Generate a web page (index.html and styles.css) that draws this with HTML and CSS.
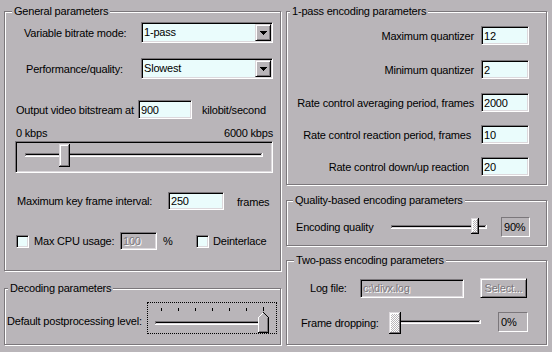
FILE: index.html
```html
<!DOCTYPE html>
<html lang="en">
<head>
  <meta charset="UTF-8">
  <title>Codec Settings</title>
  <link rel="stylesheet" href="styles.css">
</head>
<body>
  <div class="dialog">
    <div class="left-col">
      <div class="group general">
        <span class="legend lg-general">General parameters</span>

        <div class="row row-mode">
          <label class="lbl lbl-mode">Variable bitrate mode:</label>
          <div class="combo sunken">
            <span class="combo-text">1-pass</span>
            <span class="combo-btn raised">
              <svg width="7" height="4" viewBox="0 0 7 4" shape-rendering="crispEdges"><path d="M0 0h7v1h-1v1h-1v1h-1v1h-1v-1h-1v-1h-1v-1h-1z" fill="#000"/></svg>
            </span>
          </div>
        </div>

        <div class="row row-perf">
          <label class="lbl lbl-perf">Performance/quality:</label>
          <div class="combo sunken">
            <span class="combo-text">Slowest</span>
            <span class="combo-btn raised">
              <svg width="7" height="4" viewBox="0 0 7 4" shape-rendering="crispEdges"><path d="M0 0h7v1h-1v1h-1v1h-1v1h-1v-1h-1v-1h-1v-1h-1z" fill="#000"/></svg>
            </span>
          </div>
        </div>

        <div class="row row-rate">
          <label class="lbl lbl-rate">Output video bitstream at</label>
          <input class="edit sunken edit-rate" type="text" value="900">
          <span class="unit-rate">kilobit/second</span>
        </div>

        <div class="row row-scale">
          <span>0 kbps</span>
          <span>6000 kbps</span>
        </div>

        <div class="trackbox sunken">
          <svg width="254" height="28" viewBox="0 0 254 28" shape-rendering="crispEdges">
            <rect x="8" y="10" width="238" height="4" fill="#fff"/>
            <rect x="8" y="10" width="237" height="3" fill="#7b777b"/>
            <rect x="9" y="11" width="236" height="2" fill="#dcd8dc"/>
            <rect x="9" y="11" width="235" height="1" fill="#000"/>
            <rect x="42" y="1" width="11" height="23" fill="#000"/>
            <rect x="42" y="1" width="10" height="22" fill="#dcd8dc"/>
            <rect x="43" y="2" width="9" height="21" fill="#7b777b"/>
            <rect x="43" y="2" width="8" height="20" fill="#fff"/>
            <rect x="44" y="3" width="7" height="19" fill="#b9b5b9"/>
          </svg>
        </div>

        <div class="row row-key">
          <label class="lbl lbl-key">Maximum key frame interval:</label>
          <input class="edit sunken edit-key" type="text" value="250">
          <span class="unit-key">frames</span>
        </div>

        <div class="row row-cpu">
          <span class="check sunken"></span>
          <label class="lbl lbl-cpu">Max CPU usage:</label>
          <input class="edit sunken edit-cpu" type="text" value="100" disabled>
          <span class="pct">%</span>
          <span class="check sunken"></span>
          <label class="lbl lbl-deint">Deinterlace</label>
        </div>
      </div>

      <div class="group decoding">
        <span class="legend lg-decoding">Decoding parameters</span>
        <div class="row row-post">
          <label class="lbl lbl-post">Default postprocessing level:</label>
          <div class="focusbox">
            <svg width="128" height="30" viewBox="0 0 128 30" shape-rendering="crispEdges">
              <g fill="#000">
                <rect x="13" y="5" width="1" height="3"/>
                <rect x="30" y="5" width="1" height="3"/>
                <rect x="47" y="5" width="1" height="3"/>
                <rect x="64" y="5" width="1" height="3"/>
                <rect x="81" y="5" width="1" height="3"/>
                <rect x="98" y="5" width="1" height="3"/>
                <rect x="115" y="4" width="1" height="4"/>
              </g>
              <rect x="7" y="18" width="112" height="4" fill="#fff"/>
              <rect x="7" y="18" width="111" height="3" fill="#7b777b"/>
              <rect x="8" y="19" width="110" height="2" fill="#dcd8dc"/>
              <rect x="8" y="19" width="109" height="1" fill="#000"/>
              <polygon points="110,14 115,9 121,15 121,30 110,30" fill="#b9b5b9"/>
              <path d="M110.5 29V14.5L115.5 9.5" fill="none" stroke="#fff"/>
              <path d="M115.5 9.5L120.5 14.5V29.5H110" fill="none" stroke="#000"/>
              <path d="M119.5 15V28.5H111" fill="none" stroke="#7b777b"/>
            </svg>
          </div>
        </div>
      </div>
    </div>

    <div class="right-col">
      <div class="group onepass">
        <span class="legend lg-onepass">1-pass encoding parameters</span>
        <div class="qrow q1">
          <label class="lbl">Maximum quantizer</label>
          <input class="edit sunken edit-q" type="text" value="12">
        </div>
        <div class="qrow q2">
          <label class="lbl">Minimum quantizer</label>
          <input class="edit sunken edit-q" type="text" value="2">
        </div>
        <div class="qrow q3">
          <label class="lbl">Rate control averaging period, frames</label>
          <input class="edit sunken edit-q" type="text" value="2000">
        </div>
        <div class="qrow q4">
          <label class="lbl">Rate control reaction period, frames</label>
          <input class="edit sunken edit-q" type="text" value="10">
        </div>
        <div class="qrow q5">
          <label class="lbl">Rate control down/up reaction</label>
          <input class="edit sunken edit-q" type="text" value="20">
        </div>
      </div>

      <div class="group quality">
        <span class="legend lg-quality">Quality-based encoding parameters</span>
        <div class="row row-quality">
          <label class="lbl lbl-quality">Encoding quality</label>
          <svg width="96" height="19" viewBox="0 0 96 19" shape-rendering="crispEdges">
            <defs>
              <pattern id="dither" width="2" height="2" patternUnits="userSpaceOnUse">
                <rect width="2" height="2" fill="#b9b5b9"/>
                <rect width="1" height="1" fill="#fff"/>
                <rect x="1" y="1" width="1" height="1" fill="#fff"/>
              </pattern>
            </defs>
            <rect x="0" y="7" width="96" height="4" fill="#fff"/>
            <rect x="0" y="7" width="95" height="3" fill="#7b777b"/>
            <rect x="1" y="8" width="94" height="2" fill="#dcd8dc"/>
            <rect x="1" y="8" width="93" height="1" fill="#000"/>
            <rect x="80" y="0" width="8" height="16" fill="#000"/>
            <rect x="80" y="0" width="7" height="15" fill="#dcd8dc"/>
            <rect x="81" y="1" width="6" height="14" fill="#7b777b"/>
            <rect x="81" y="1" width="5" height="13" fill="#fff"/>
            <rect x="82" y="2" width="4" height="12" fill="url(#dither)"/>
          </svg>
          <span class="static st-quality">90%</span>
        </div>
      </div>

      <div class="group twopass">
        <span class="legend lg-twopass">Two-pass encoding parameters</span>
        <div class="row row-log">
          <label class="lbl lbl-log">Log file:</label>
          <input class="edit sunken edit-log" type="text" value="c:\divx.log" disabled>
          <button class="btn raised" disabled>Select...</button>
        </div>
        <div class="row row-drop">
          <label class="lbl lbl-drop">Frame dropping:</label>
          <svg width="92" height="22" viewBox="0 0 92 22" shape-rendering="crispEdges">
            <defs>
              <pattern id="dither2" width="2" height="2" patternUnits="userSpaceOnUse">
                <rect width="2" height="2" fill="#b9b5b9"/>
                <rect width="1" height="1" fill="#fff"/>
                <rect x="1" y="1" width="1" height="1" fill="#fff"/>
              </pattern>
            </defs>
            <rect x="2" y="8" width="90" height="4" fill="#fff"/>
            <rect x="2" y="8" width="89" height="3" fill="#7b777b"/>
            <rect x="3" y="9" width="88" height="2" fill="#dcd8dc"/>
            <rect x="3" y="9" width="87" height="1" fill="#000"/>
            <rect x="0" y="0" width="12" height="22" fill="#000"/>
            <rect x="0" y="0" width="11" height="21" fill="#dcd8dc"/>
            <rect x="1" y="1" width="10" height="20" fill="#7b777b"/>
            <rect x="1" y="1" width="9" height="19" fill="#fff"/>
            <rect x="2" y="2" width="8" height="18" fill="url(#dither2)"/>
          </svg>
          <span class="static st-drop">0%</span>
        </div>
      </div>
    </div>
  </div>
</body>
</html>
```

FILE: styles.css
```css
body {
  margin: 0;
  background-color: #b9b5b9;
  font-family: "Liberation Sans", Arial, sans-serif;
  font-size: 11px;
  letter-spacing: -0.2px;
  color: #000;
}

.dialog {
  display: flex;
  width: 552px;
  height: 352px;
  padding: 11px 0 0 4px;
  box-sizing: border-box;
  overflow: hidden;
}

.left-col {
  width: 277px;
}

.right-col {
  width: 261px;
  margin-left: 5px;
}

/* etched group box */
.group {
  position: relative;
  box-sizing: border-box;
  border: 1px solid #7b777b;
  box-shadow: inset 1px 1px 0 #fff, 1px 1px 0 #fff;
}

.legend {
  position: absolute;
  top: -7px;
  line-height: 13px;
  padding: 0 2px;
  background-color: #b9b5b9;
  white-space: nowrap;
}

.lg-general { left: 7px; }
.lg-decoding { left: 3px; }
.lg-onepass { left: 3px; }
.lg-quality { left: 6px; }
.lg-twopass { left: 7px; }

.general { height: 260px; }
.decoding { height: 57px; margin-top: 17px; }
.onepass { height: 174px; }
.quality { height: 46px; margin-top: 15px; }
.twopass { height: 85px; margin-top: 14px; }

.row {
  display: flex;
  align-items: center;
}

.lbl {
  flex-shrink: 0;
  white-space: nowrap;
}

/* 3d edges */
.sunken {
  box-sizing: border-box;
  border: 1px solid;
  border-color: #7b777b #fff #fff #7b777b;
  box-shadow: inset 1px 1px 0 #000, inset -1px -1px 0 #dcd8dc;
}

.raised {
  box-sizing: border-box;
  border: 1px solid;
  border-color: #dcd8dc #000 #000 #dcd8dc;
  box-shadow: inset 1px 1px 0 #fff, inset -1px -1px 0 #7b777b;
  background-color: #b9b5b9;
}

.combo {
  display: flex;
  width: 132px;
  height: 21px;
  padding: 1px;
  background-color: #eafcfc;
}

.combo-text {
  flex: 1;
  padding-left: 1px;
  line-height: 17px;
}

.combo-btn {
  display: flex;
  align-items: center;
  justify-content: center;
  width: 16px;
  height: 17px;
}

.edit {
  font-family: inherit;
  font-size: 11px;
  letter-spacing: -0.2px;
  color: #000;
  background-color: #eafcfc;
  padding: 0 0 0 2px;
  margin: 0;
  height: 19px;
  outline: none;
}

.edit:disabled {
  background-color: #b9b5b9;
  color: #7b777b;
  text-shadow: 1px 1px 0 #fff;
}

/* general parameters */
.row-mode { margin-top: 10px; height: 21px; padding-left: 19px; }
.lbl-mode { width: 117px; }

.row-perf { margin-top: 15px; height: 21px; padding-left: 21px; }
.lbl-perf { width: 115px; }

.row-rate { margin-top: 21px; height: 19px; padding-left: 11px; }
.lbl-rate { width: 122px; }
.edit-rate { width: 54px; }
.unit-rate { margin-left: 10px; }

.row-scale {
  margin-top: 8px;
  height: 12px;
  padding: 0 7px 0 11px;
  justify-content: space-between;
}

.trackbox {
  margin: 2px 0 0 10px;
  width: 258px;
  height: 32px;
  padding: 1px;
}

.trackbox svg {
  display: block;
}

.row-key { margin-top: 19px; height: 18px; padding-left: 12px; }
.lbl-key { width: 151px; }
.edit-key { width: 56px; height: 18px; }
.unit-key { margin-left: 13px; padding-top: 2px; }

.row-cpu { margin-top: 22px; height: 18px; padding-left: 11px; }
.check {
  display: block;
  width: 13px;
  height: 13px;
  flex-shrink: 0;
  background-color: #eafcfc;
}
.lbl-cpu { width: 86px; margin-left: 5px; }
.edit-cpu { width: 37px; height: 18px; }
.pct { width: 33px; margin-left: 6px; }
.lbl-deint { margin-left: 4px; }

/* decoding parameters */
.row-post { margin-top: 13px; height: 32px; padding-left: 2px; }
.lbl-post { width: 140px; padding-top: 5px; }

.focusbox {
  box-sizing: border-box;
  width: 130px;
  height: 32px;
  border: 1px dotted #000;
}

.focusbox svg {
  display: block;
}

/* 1-pass */
.qrow {
  display: flex;
  align-items: center;
  justify-content: flex-end;
  height: 19px;
  padding-right: 17px;
}

.q1 { margin-top: 14px; }
.q2 { margin-top: 15px; }
.q3 { margin-top: 14px; }
.q4 { margin-top: 13px; }
.q5 { margin-top: 13px; }

.q1 .lbl, .q2 .lbl, .q3 .lbl { margin-right: 7px; }
.q4 .lbl { margin-right: 10px; }
.q5 .lbl { margin-right: 12px; }

.edit-q { width: 48px; }

/* quality based */
.row-quality { margin-top: 16px; height: 20px; padding-left: 9px; }
.lbl-quality { width: 95px; }

.static {
  box-sizing: border-box;
  height: 20px;
  line-height: 18px;
  padding-left: 2px;
  border: 1px solid;
  border-color: #7b777b #fff #fff #7b777b;
}

.st-quality { width: 29px; margin-left: 14px; }

/* two-pass */
.row-log { margin-top: 17px; height: 20px; padding-left: 23px; }
.lbl-log { width: 50px; }
.edit-log { width: 104px; }

.btn {
  margin-left: 16px;
  width: 47px;
  height: 20px;
  padding: 0;
  font-family: inherit;
  font-size: 11px;
  letter-spacing: -0.2px;
  color: #7b777b;
  text-shadow: 1px 1px 0 #fff;
}

.row-drop { margin-top: 14px; height: 22px; padding-left: 14px; }
.lbl-drop { width: 88px; }
.st-drop { width: 30px; margin-left: 17px; align-self: flex-start; }
```
